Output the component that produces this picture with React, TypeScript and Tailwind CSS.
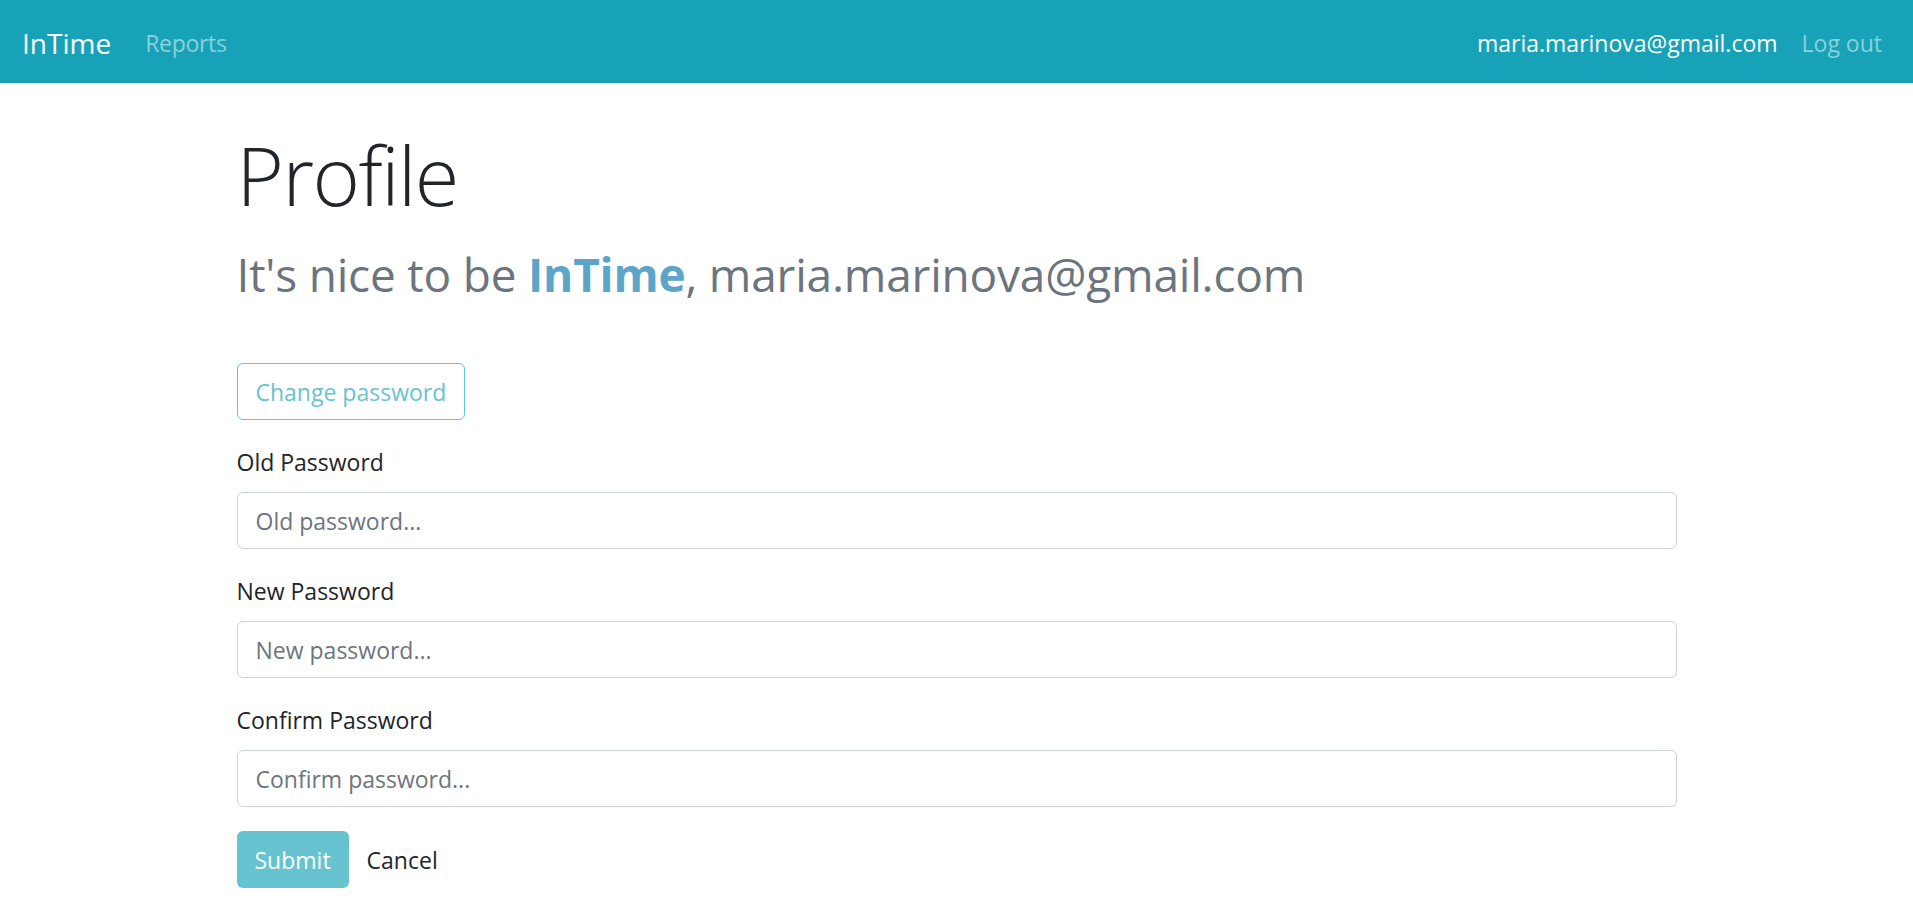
import React from 'react'

const font = { fontFamily: '"Open Sans", "Noto Sans", sans-serif' }

const Field = ({ label, placeholder }: { label: string; placeholder: string }) => (
  <div className="mb-[24px]">
    <label className="mb-[12px] block text-[23px] leading-[36px] text-[#212529]">{label}</label>
    <input
      type="password"
      placeholder={placeholder}
      className="block h-[57px] w-full rounded-[6px] border-[1.5px] border-[#ced4da] bg-white px-[18px] text-[23px] text-[#495057] placeholder:text-[#6c757d] focus:outline-none"
    />
  </div>
)

export default function App() {
  return (
    <div className="min-h-screen bg-white" style={font}>
      {/* navbar */}
      <nav className="flex h-[83px] items-center bg-[#17a2b8] pl-[22px] pr-[31px] pt-[3px]">
        <a className="mr-[22px] text-[28px] leading-[45px] text-white">InTime</a>
        <a className="px-[12px] text-[23px] tracking-[-0.3px] text-[#8bd0db]">Reports</a>
        <div className="ml-auto flex items-center">
          <span className="px-[12px] text-[23px] text-white">maria.marinova@gmail.com</span>
          <a className="pl-[12px] text-[23px] text-[#8bd0db]">Log out</a>
        </div>
      </nav>

      <main className="mx-auto w-[1440px] pt-[43px]">
        <h1 className="text-[81px] font-light leading-[1.2] tracking-[-1.5px] text-[#212529]">Profile</h1>
        <h2 className="mt-[24px] text-[46px] font-normal leading-[1.2] tracking-[-0.2px] text-[#6c757d]">
          It's nice to be <span className="font-bold text-[#5ca5c9]">InTime</span>, maria.marinova@gmail.com
        </h2>

        <button className="mt-[61px] mb-[24px] h-[57px] rounded-[6px] border-[1.5px] border-[#68c3d1] px-[18px] text-[23px] text-[#68c3d1]">
          Change password
        </button>

        <form>
          <Field label="Old Password" placeholder="Old password..." />
          <Field label="New Password" placeholder="New password..." />
          <Field label="Confirm Password" placeholder="Confirm password..." />
          <div className="flex items-center">
            <button type="button" className="h-[57px] rounded-[6px] bg-[#68c3d1] px-[18px] text-[23px] text-white">
              Submit
            </button>
            <button type="button" className="h-[57px] px-[18px] text-[23px] text-[#212529]">
              Cancel
            </button>
          </div>
        </form>
      </main>
    </div>
  )
}
